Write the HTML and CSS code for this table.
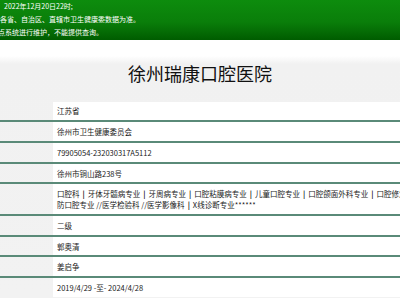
FILE: index.html
```html
<!DOCTYPE html>
<html lang="zh-CN">
<head>
<meta charset="utf-8">
<title>徐州瑞康口腔医院</title>
<link rel="stylesheet" href="styles.css">
</head>
<body>
<header class="banner">
  <p class="line line-1">2022年12月20日22时;</p>
  <p class="line line-2">各省、自治区、直辖市卫生健康委数据为准。</p>
  <p class="line line-3">点系统进行维护，不能提供查询。</p>
</header>
<main class="content">
  <h1 class="title">徐州瑞康口腔医院</h1>
  <table class="info">
    <tr><td class="label"></td><td class="value">江苏省</td></tr>
    <tr><td class="label"></td><td class="value">徐州市卫生健康委员会</td></tr>
    <tr><td class="label"></td><td class="value">79905054-232030317A5112</td></tr>
    <tr><td class="label"></td><td class="value">徐州市铜山路238号</td></tr>
    <tr><td class="label"></td><td class="value">口腔科<b class="sep">|</b>牙体牙髓病专业<b class="sep">|</b>牙周病专业<b class="sep">|</b>口腔粘膜病专业<b class="sep">|</b>儿童口腔专业<b class="sep">|</b>口腔颌面外科专业<b class="sep">|</b>口腔修复专业<b class="sep">|</b>预<br>防口腔专业 //医学检验科 //医学影像科<b class="sep">|</b>X线诊断专业******</td></tr>
    <tr><td class="label"></td><td class="value">二级</td></tr>
    <tr><td class="label"></td><td class="value">郭奥清</td></tr>
    <tr><td class="label"></td><td class="value">姜启争</td></tr>
    <tr><td class="label"></td><td class="value">2019/4/29 -至- 2024/4/28</td></tr>
  </table>
</main>
</body>
</html>
```

FILE: styles.css
```css
html, body {
  margin: 0;
  padding: 0;
  overflow: hidden;
  width: 400px;
  height: 298px;
}

body {
  font-family: "Noto Sans CJK SC", "Noto Sans", sans-serif;
  background: #f2f2f2;
  color: #222;
}

.banner {
  height: 40px;
  background: linear-gradient(#0d8c0d 0%, #0a7e0a 55%, #005c00 100%);
  color: #fff;
  font-size: 7px;
  line-height: 13px;
  overflow: hidden;
}

.line {
  margin: 0;
  white-space: nowrap;
}

.line-1 { padding-left: 4px; }
.line-3 { margin-left: -2px; }

.content {
  background: linear-gradient(#ffffff 0, #ffffff 16px, #f1f1f1 24px, #f2f2f2 100%);
  overflow: hidden;
}

.title {
  margin: 21px 0 16.6px;
  font-size: 18px;
  font-weight: 400;
  line-height: 24px;
  text-align: center;
  color: #111;
}

.info {
  border-collapse: collapse;
  width: 560px;
  font-size: 7.5px;
  line-height: 11px;
}

.info td {
  padding: 3.85px 0;
  border-bottom: 2px solid #5a8a78;
  vertical-align: middle;
}

.info tr:last-child td {
  border-bottom: none;
}

.label {
  width: 53px;
  background: transparent;
}

.value {
  background: #fff;
  padding-left: 4px !important;
  white-space: nowrap;
  color: #1a1a1a;
}

.sep {
  font-weight: 700;
  margin: 0 3px;
}
```
